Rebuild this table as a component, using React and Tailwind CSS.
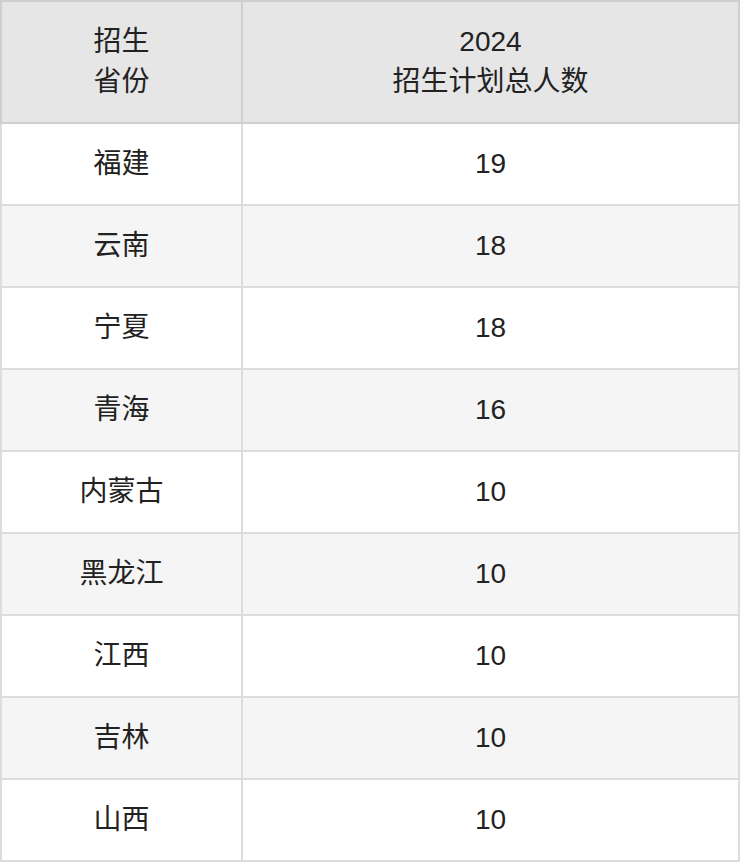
import React from "react";

const rows = [
  ["福建", "19"],
  ["云南", "18"],
  ["宁夏", "18"],
  ["青海", "16"],
  ["内蒙古", "10"],
  ["黑龙江", "10"],
  ["江西", "10"],
  ["吉林", "10"],
  ["山西", "10"],
];

const font = { fontFamily: '"Liberation Sans", "Noto Sans CJK SC", sans-serif' };

export default function App() {
  return (
    <div className="w-[740px] bg-white text-[#222] text-[28px]" style={font}>
      <div className="flex border-t-2 border-l-2 border-[#cfcfcf] bg-[#e6e6e6] leading-[40px]">
        <div className="w-[241px] h-[122px] flex items-center justify-center text-center border-r-2 border-b-2 border-[#cfcfcf]">
          <span>招生<br />省份</span>
        </div>
        <div className="flex-1 h-[122px] flex items-center justify-center text-center border-r-2 border-b-2 border-[#cfcfcf]">
          <span>2024<br />招生计划总人数</span>
        </div>
      </div>
      {rows.map(([prov, num], i) => (
        <div key={prov} className={`flex border-l-2 border-[#dcdcdc] ${i % 2 ? "bg-[#f5f5f5]" : "bg-white"}`}>
          <div className="w-[241px] h-[82px] flex items-center justify-center border-r-2 border-b-2 border-[#dcdcdc]">
            {prov}
          </div>
          <div className="flex-1 h-[82px] flex items-center justify-center border-r-2 border-b-2 border-[#dcdcdc]">
            {num}
          </div>
        </div>
      ))}
    </div>
  );
}
